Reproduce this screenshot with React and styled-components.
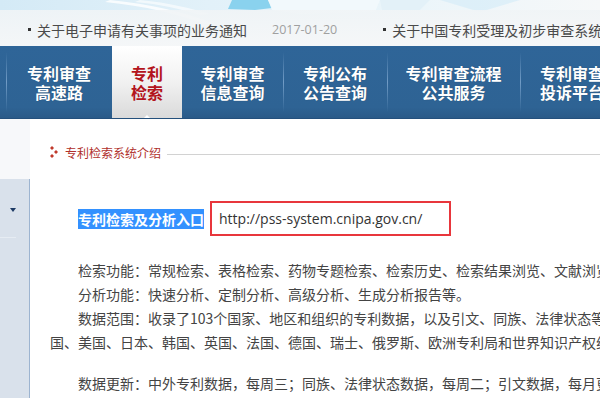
import React from 'react';
import styled, { createGlobalStyle } from 'styled-components';

const Global = createGlobalStyle`
  html, body { margin: 0; padding: 0; background: #fff; overflow: hidden; }
  body {
    font-family: "Noto Sans CJK SC", "Noto Sans", sans-serif;
    width: 600px;
    height: 398px;
  }
`;

const Page = styled.div`
  width: 600px;
  height: 398px;
  overflow: hidden;
  display: flex;
  flex-direction: column;
`;

const Header = styled.header`
  position: relative;
  height: 46px;
  flex: none;
  background: linear-gradient(90deg, #d4eaf6 0%, #e2f1f9 35%, #eaf5fa 65%, #f6f8f9 100%);
  overflow: hidden;
`;

const HeaderArt = styled.svg`
  position: absolute;
  left: 0;
  top: 0;
  width: 600px;
  height: 46px;
`;

const Ticker = styled.div`
  position: relative;
  margin-top: 10px;
  height: 36px;
  padding-top: 3px;
  box-sizing: border-box;
  background: linear-gradient(180deg, rgba(240, 244, 246, 0.9), rgba(246, 247, 248, 0.95));
  display: flex;
  align-items: center;
  padding-left: 28px;
  white-space: nowrap;
`;

const TickerItem = styled.span`
  display: flex;
  align-items: center;
  font-size: 14px;
  color: #4a4a4a;
  margin-right: ${p => p.$gap}px;
  &::before {
    content: "";
    width: 3px;
    height: 3px;
    background: #333;
    margin-right: 6px;
  }
`;

const TickerDate = styled.span`
  font-family: "Open Sans", "Liberation Sans", sans-serif;
  font-size: 12.5px;
  color: #a0a0a0;
  margin-right: 46px;
`;

const Nav = styled.nav`
  flex: none;
  height: 72px;
  display: flex;
  padding-left: 6px;
  background: linear-gradient(180deg, #2f6598 0%, #2e6394 85%, #2a5a88 100%);
  border-bottom: 1px solid #24507c;
  overflow: hidden;
`;

const NavItem = styled.div`
  position: relative;
  flex: none;
  width: ${p => p.$w}px;
  display: flex;
  flex-direction: column;
  align-items: center;
  justify-content: center;
  font-size: 16px;
  font-weight: 700;
  line-height: 19px;
  color: ${p => (p.$active ? '#b3141c' : '#fff')};
  background: ${p => (p.$active ? 'linear-gradient(180deg, #ffffff 0%, #f1f1f1 50%, #dadada 100%)' : 'transparent')};
  text-shadow: ${p => (p.$active ? 'none' : '0 0 1px rgba(0,0,0,0.3)')};
  padding-top: 2px;
  box-sizing: border-box;
  &::before {
    content: "";
    display: ${p => (p.$sep ? 'block' : 'none')};
    position: absolute;
    left: 0;
    top: 6px;
    bottom: 6px;
    width: 1px;
    background: linear-gradient(180deg, rgba(120,160,200,0), rgba(130,170,210,0.8) 50%, rgba(120,160,200,0));
  }
  &::after {
    content: "";
    display: ${p => (p.$active ? 'block' : 'none')};
    position: absolute;
    left: 50%;
    bottom: -1px;
    margin-left: -4px;
    border-left: 4px solid transparent;
    border-right: 4px solid transparent;
    border-bottom: 4px solid #fff;
  }
`;

const Body = styled.div`
  flex: 1;
  display: flex;
  min-height: 0;
`;

const Sidebar = styled.aside`
  flex: none;
  width: 30px;
  display: flex;
  flex-direction: column;
`;

const SideTop = styled.div`
  height: 60px;
  background: #f7f8fa;
`;

const SidePanel = styled.div`
  flex: 1;
  background: #d9e1eb;
  border-right: 1px solid #9db4d0;
  padding-top: 29px;
  box-sizing: border-box;
`;

const SideCaret = styled.div`
  margin-left: 10px;
  width: 0;
  height: 0;
  border-left: 3px solid transparent;
  border-right: 3px solid transparent;
  border-top: 4px solid #1d3a64;
`;

const SideDivider = styled.div`
  margin-top: 25px;
  width: 16px;
  height: 1px;
  background: #e6ecf3;
`;

const Main = styled.main`
  flex: 1;
  min-width: 0;
  padding: 26px 0 0 20px;
  overflow: hidden;
  white-space: nowrap;
`;

const SectionTitle = styled.div`
  display: flex;
  align-items: center;
  height: 14px;
  font-size: 12px;
  color: #b0302c;
`;

const TitleIcon = styled.svg`
  width: 8px;
  height: 12px;
  margin-right: 7px;
  flex: none;
`;

const TitleRule = styled.div`
  flex: 1;
  height: 1px;
  background: #d2d2d2;
  margin: 4px 0 0 6px;
`;

const EntryRow = styled.div`
  display: flex;
  align-items: center;
  margin-top: 42px;
  padding-left: 28px;
`;

const Highlight = styled.span`
  display: inline-block;
  height: 20px;
  line-height: 20px;
  font-size: 14px;
  font-weight: 700;
  color: #fff;
  background: #3391ff;
`;

const LinkBox = styled.div`
  margin-left: 6px;
  width: 241px;
  height: 35px;
  box-sizing: border-box;
  border: 2px solid #e8363c;
  display: flex;
  align-items: center;
  padding-left: 7px;
  font-family: "Open Sans", "Liberation Sans", sans-serif;
  font-size: 14px;
  color: #333;
`;

const Text = styled.div`
  margin-top: ${p => p.$mt || 0}px;
  text-indent: 28px;
  font-size: 14px;
  line-height: 24px;
  color: #444;
`;

const navItems = [
  { w: 106, lines: ['专利审查', '高速路'], sep: true },
  { w: 70, lines: ['专利', '检索'], active: true },
  { w: 101, lines: ['专利审查', '信息查询'] },
  { w: 104, lines: ['专利公布', '公告查询'], sep: true },
  { w: 133, lines: ['专利审查流程', '公共服务'], sep: true },
  { w: 104, lines: ['专利审查', '投诉平台'], sep: true },
];

export default function App() {
  return (
    <Page>
      <Global />
      <Header>
        <HeaderArt viewBox="0 0 600 46" preserveAspectRatio="none">
          <path d="M110 0 C150 4 185 12 215 24 L205 24 C178 14 145 6 105 2 Z" fill="#ffffff" opacity="0.8" />
          <path d="M140 0 C170 3 190 8 210 14 L200 15 C180 9 160 4 135 2 Z" fill="#ffffff" opacity="0.6" />
          <path d="M232 0 L268 0 L272 8 L255 10 L228 9 Z" fill="#8ad2ee" />
          <path d="M268 0 L380 0 L375 12 L300 14 L272 10 Z" fill="#f3f9fc" opacity="0.9" />
          <path d="M380 0 L430 0 L420 10 L382 10 Z" fill="#e3f1f8" />
          <path d="M440 0 L520 0 L480 12 Z" fill="#d6edf8" opacity="0.7" />
        </HeaderArt>
        <Ticker>
          <TickerItem $gap={25}>关于电子申请有关事项的业务通知</TickerItem>
          <TickerDate>2017-01-20</TickerDate>
          <TickerItem $gap={0}>关于中国专利受理及初步审查系统上线的通知</TickerItem>
        </Ticker>
      </Header>
      <Nav>
        {navItems.map((it, i) => (
          <NavItem key={i} $w={it.w} $active={it.active} $sep={it.sep}>
            {it.lines.map(l => (
              <span key={l}>{l}</span>
            ))}
          </NavItem>
        ))}
      </Nav>
      <Body>
        <Sidebar>
          <SideTop />
          <SidePanel>
            <SideCaret />
            <SideDivider />
          </SidePanel>
        </Sidebar>
        <Main>
          <SectionTitle>
            <TitleIcon viewBox="0 0 8 12">
              <path d="M2 0 L4 2 L2 4 L0 2 Z" fill="#c0392b" />
              <path d="M6 4 L8 6 L6 8 L4 6 Z" fill="#c0392b" />
              <path d="M2 8 L4 10 L2 12 L0 10 Z" fill="#c0392b" />
            </TitleIcon>
            专利检索系统介绍
            <TitleRule />
          </SectionTitle>
          <EntryRow>
            <Highlight>专利检索及分析入口</Highlight>
            <LinkBox>http://pss-system.cnipa.gov.cn/</LinkBox>
          </EntryRow>
          <Text $mt={22}>检索功能：常规检索、表格检索、药物专题检索、检索历史、检索结果浏览、文献浏览、批量下载等。</Text>
          <Text>分析功能：快速分析、定制分析、高级分析、生成分析报告等。</Text>
          <Text>
            数据范围：收录了103个国家、地区和组织的专利数据，以及引文、同族、法律状态等数据信息，其中涵盖了中
            <br />
            国、美国、日本、韩国、英国、法国、德国、瑞士、俄罗斯、欧洲专利局和世界知识产权组织等。
          </Text>
          <Text $mt={17}>数据更新：中外专利数据，每周三；同族、法律状态数据，每周二；引文数据，每月更新。</Text>
        </Main>
      </Body>
    </Page>
  );
}
